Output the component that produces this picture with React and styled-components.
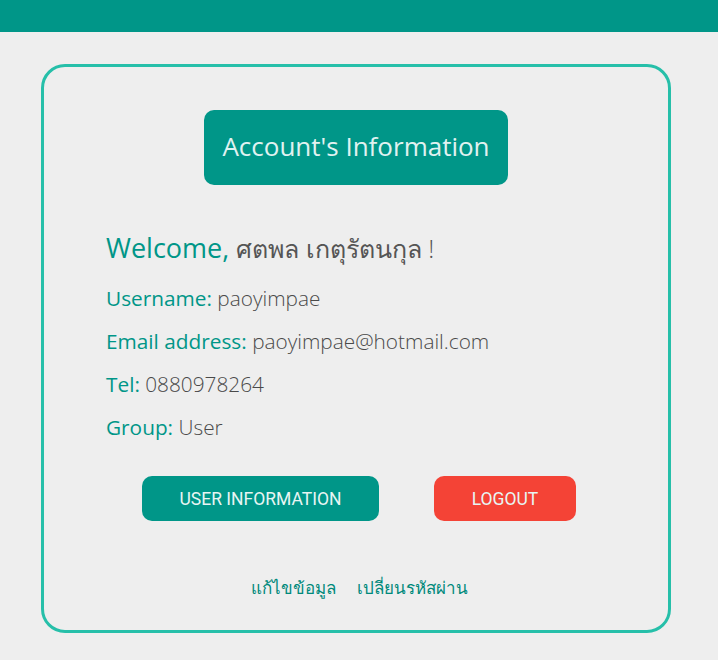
import styled, { createGlobalStyle } from 'styled-components'

const GlobalStyle = createGlobalStyle`
    body {
        margin: 0;
        background: #eeeeee;
        font-family: 'Open Sans', 'Noto Sans', sans-serif;
    }
`

const user = {
    name: 'ศตพล เกตุรัตนกุล',
    username: 'paoyimpae',
    email: 'paoyimpae@hotmail.com',
    tel: '0880978264',
    group: 'User'
}

const TopBar = styled.div`
    height: 32px;
    background: #009688;
`

const Card = styled.div`
    box-sizing: border-box;
    width: 630px;
    height: 569px;
    margin: 32px 0 0 41px;
    border: 3px solid #26bfa9;
    border-radius: 24px;
    padding: 43px 0 0 62px;
`

const TitleRow = styled.div`
    display: flex;
    justify-content: center;
    padding-right: 62px;
`

const Title = styled.div`
    width: 304px;
    height: 75px;
    border-radius: 10px;
    background: #009688;
    color: #e0f2f1;
    font-size: 26px;
    line-height: 1;
    padding-bottom: 3px;
    box-sizing: border-box;
    display: flex;
    align-items: center;
    justify-content: center;
`

const Welcome = styled.div`
    margin-top: 44px;
    font-size: 27px;
    line-height: 37px;
    color: #009688;

    span {
        color: #555;
        font-weight: 300;
        font-size: 25px;
    }
`

const InfoList = styled.div`
    margin-top: 18px;
    display: flex;
    flex-direction: column;
    gap: 16px;
`

const Line = styled.div`
    font-size: 20.8px;
    line-height: 27px;
    color: #009688;

    span {
        color: #4a4a4a;
        font-weight: 300;
    }
`

const Buttons = styled.div`
    display: flex;
    gap: 55px;
    margin-top: 35px;
    padding-left: 36px;
`

const Button = styled.button`
    height: 45px;
    width: ${(p) => p.$w}px;
    border: none;
    border-radius: 10px;
    background: ${(p) => (p.$danger ? '#f44336' : '#009688')};
    color: #e8f5f3;
    font-family: Roboto, sans-serif;
    font-size: 17.5px;
    text-transform: uppercase;
`

const Links = styled.div`
    display: flex;
    justify-content: center;
    gap: 21px;
    margin-top: 53px;
    padding-right: 56px;

    a {
        color: #00897b;
        font-size: 17px;
        text-decoration: none;
    }
`

function App() {
    return (
        <>
            <GlobalStyle />
            <TopBar />
            <Card>
                <TitleRow>
                    <Title>Account's Information</Title>
                </TitleRow>
                <Welcome>
                    Welcome, <span>{user.name} !</span>
                </Welcome>
                <InfoList>
                    <Line>
                        Username: <span>{user.username}</span>
                    </Line>
                    <Line>
                        Email address: <span>{user.email}</span>
                    </Line>
                    <Line>
                        Tel: <span>{user.tel}</span>
                    </Line>
                    <Line>
                        Group: <span>{user.group}</span>
                    </Line>
                </InfoList>
                <Buttons>
                    <Button $w={237}>User Information</Button>
                    <Button $w={142} $danger>
                        Logout
                    </Button>
                </Buttons>
                <Links>
                    <a href="#">แก้ไขข้อมูล</a>
                    <a href="#">เปลี่ยนรหัสผ่าน</a>
                </Links>
            </Card>
        </>
    )
}

export default App
